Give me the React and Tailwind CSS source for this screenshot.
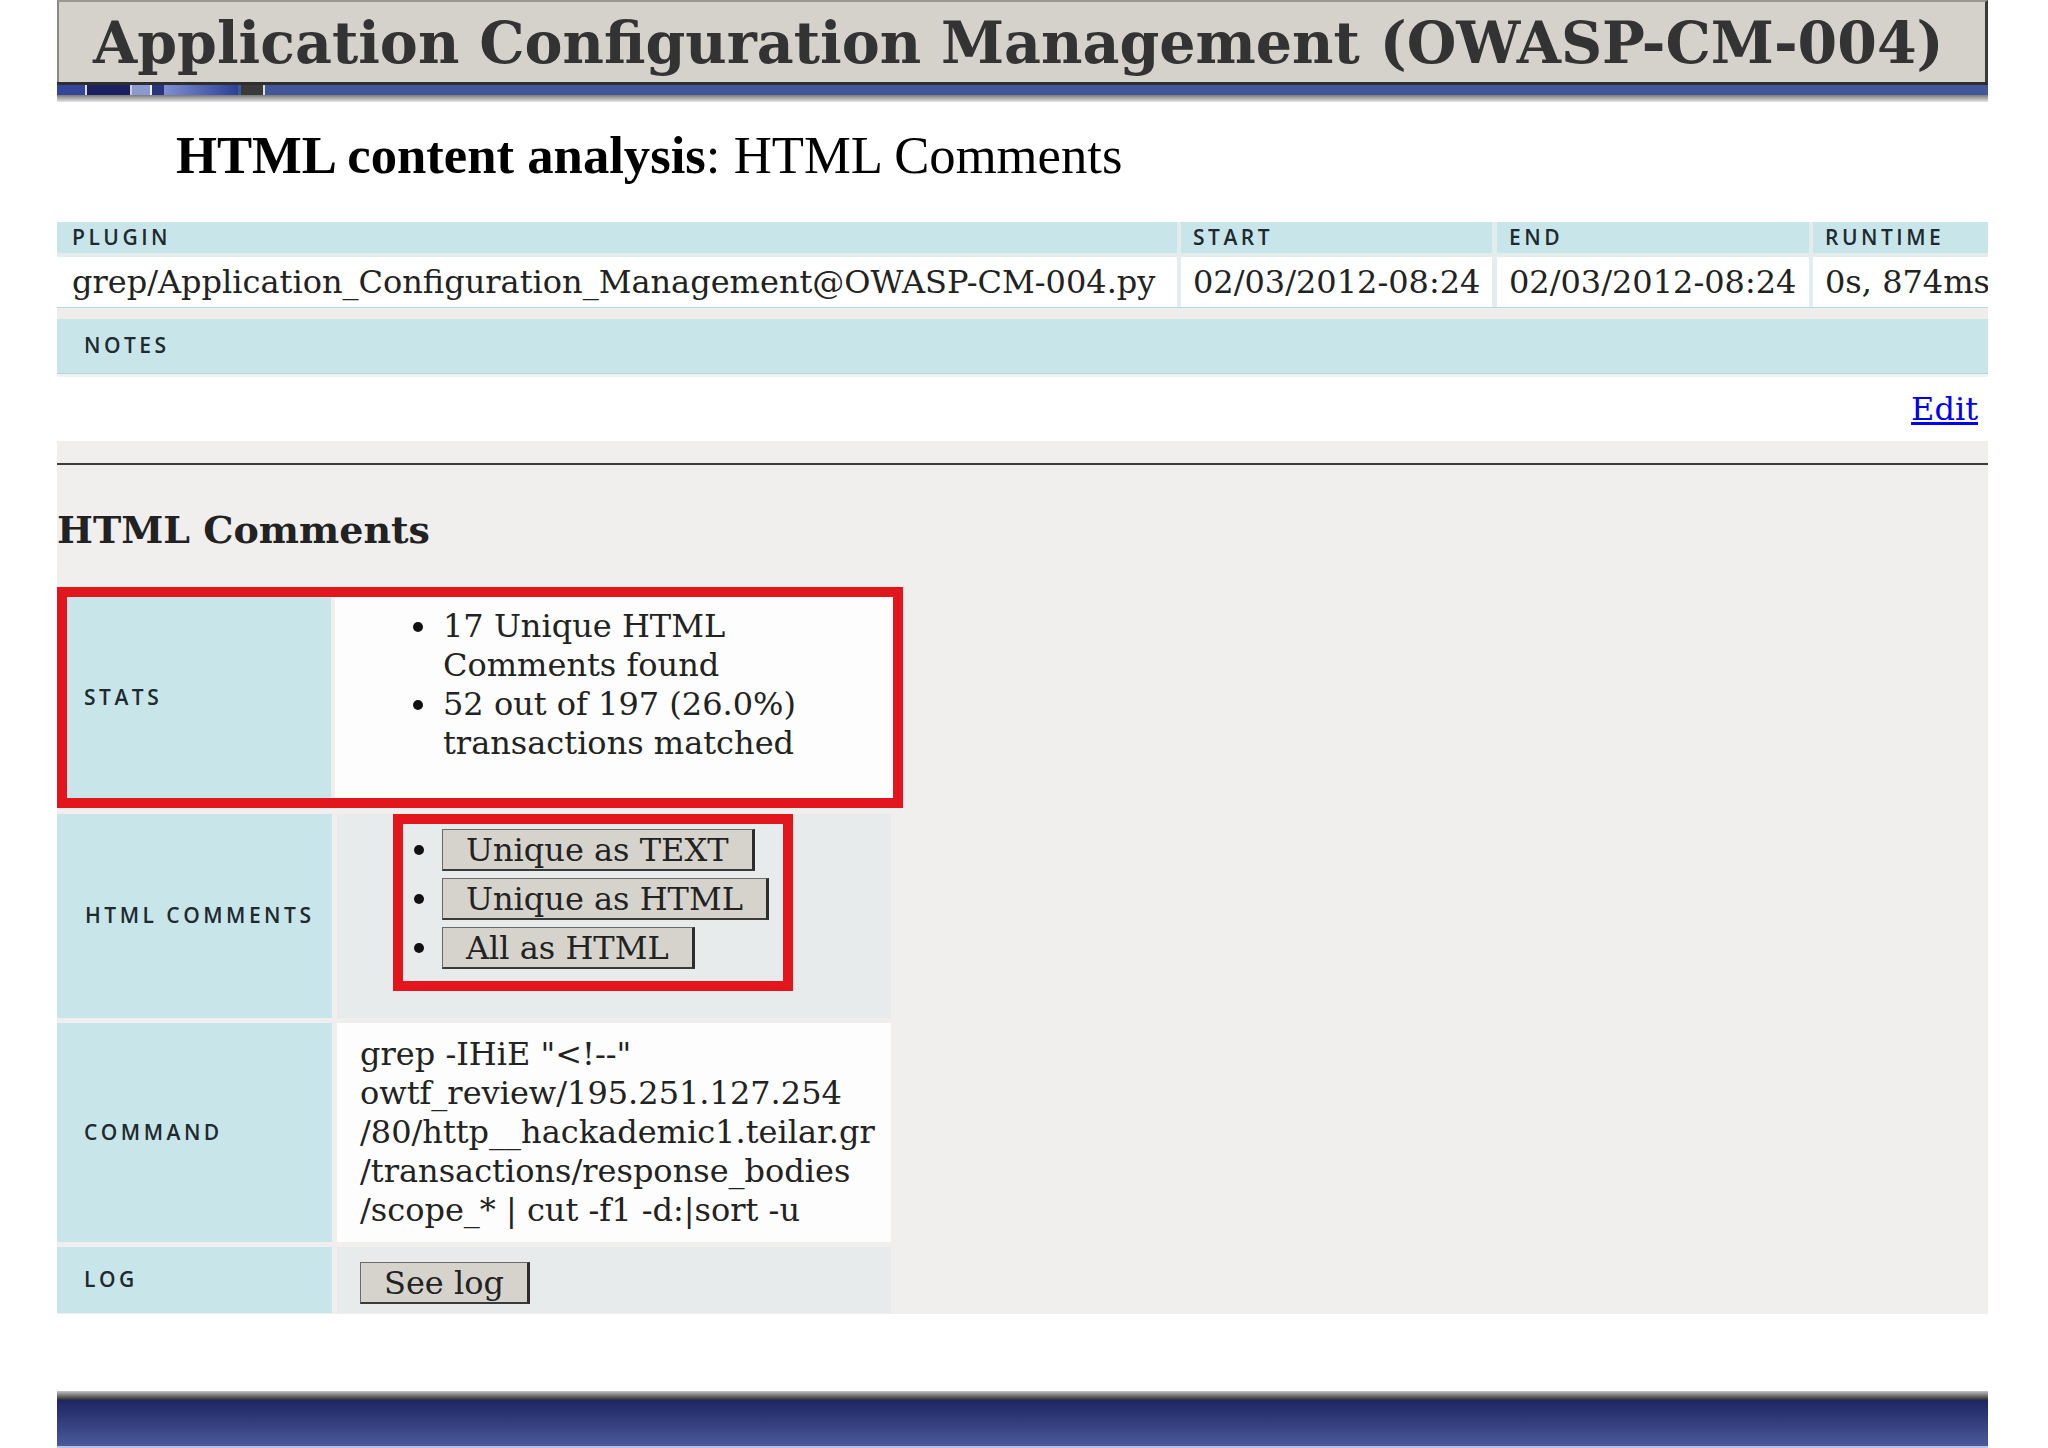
import React from "react";

const serif = "font-['DejaVu_Serif',serif]";
const label =
  "font-['Open_Sans',sans-serif] font-semibold text-[21px] tracking-[3.5px] text-[#1e2a30] uppercase whitespace-nowrap";

function Btn({ children }) {
  return (
    <div className="h-[42px] px-[23px] bg-[#d6d3cd] border-t border-l border-t-[#6a6a6a] border-l-[#6a6a6a] border-r-[3px] border-r-[#2d2d2d] border-b-[2px] border-b-[#3a3a3a] flex items-center">
      <span className={`${serif} text-[32px] leading-none text-[#222] whitespace-nowrap`}>{children}</span>
    </div>
  );
}

function Dot() {
  return <div className="w-[10px] h-[10px] rounded-full bg-[#111]" />;
}

export default function App() {
  return (
    <div className="w-[2048px] h-[1448px] bg-white overflow-hidden">
      <div className="ml-[57px] w-[1931px] flex flex-col">
        {/* header */}
        <div className="h-[82px] bg-[#d5d2cb] border-t-2 border-t-[#9a9894] border-l-2 border-l-[#8a8884] border-r-[3px] border-r-[#3a3a3a] flex items-center pl-[34px]">
          <span className={`${serif} font-bold text-[57px] leading-none text-[#333] whitespace-nowrap`}>
            Application Configuration Management (OWASP-CM-004)
          </span>
        </div>
        <div className="h-[3px] bg-[#2e2e2e]" />
        <div className="h-[10px] flex bg-[#42579a]">
          <div className="w-[28px] bg-[#34469c]" />
          <div className="w-[2px] bg-[#dde]" />
          <div className="w-[43px] bg-[#1b2060]" />
          <div className="w-[2px] bg-[#ccd]" />
          <div className="w-[18px] bg-[#8a9ad0]" />
          <div className="w-[2px] bg-[#eee]" />
          <div className="w-[12px] bg-[#2a3580]" />
          <div className="w-[74px] bg-gradient-to-r from-[#7f8fd0] to-[#2f3f98]" />
          <div className="w-[3px] bg-[#42579a]" />
          <div className="w-[22px] bg-[#3a3a3a]" />
          <div className="w-[2px] bg-[#ddd]" />
        </div>
        <div className="h-[7px] bg-gradient-to-b from-[#7a7a7a] to-[#e6e6e6]" />

        {/* page title */}
        <div className="mt-[27px] pl-[119px] font-['Liberation_Serif',serif] text-[52.7px] leading-[52px] text-black whitespace-nowrap">
          <span className="font-bold">HTML content analysis</span>: HTML Comments
        </div>

        {/* plugin table */}
        <div className="mt-[41px] flex flex-col bg-[#e4eded] gap-[4px]">
          <div className="flex h-[31px] gap-[4px]">
            <div className="w-[1120px] bg-[#c8e6e9] flex items-center pl-[15px]"><span className={label}>Plugin</span></div>
            <div className="w-[311px] bg-[#c8e6e9] flex items-center pl-[12px]"><span className={label}>Start</span></div>
            <div className="w-[312px] ml-[1px] bg-[#c8e6e9] flex items-center pl-[12px]"><span className={label}>End</span></div>
            <div className="w-[175px] bg-[#c8e6e9] flex items-center pl-[12px]"><span className={label}>Runtime</span></div>
          </div>
          <div className={`flex h-[50px] gap-[4px] ${serif} text-[32px] text-[#222] whitespace-nowrap`}>
            <div className="w-[1120px] bg-white flex items-center pl-[15px] overflow-hidden">grep/Application_Configuration_Management@OWASP-CM-004.py</div>
            <div className="w-[311px] bg-white flex items-center pl-[12px] overflow-hidden">02/03/2012-08:24</div>
            <div className="w-[312px] ml-[1px] bg-white flex items-center pl-[12px] overflow-hidden">02/03/2012-08:24</div>
            <div className="w-[175px] bg-white flex items-center pl-[12px] overflow-hidden">0s, 874ms</div>
          </div>
        </div>
        <div className="h-[1px] bg-[#b9d9dc]" />
        <div className="h-[11px] bg-[#efecec]" />
        <div className="h-[55px] bg-[#c8e6e9] border-b border-b-[#b4d6d9] flex items-center pl-[27px]">
          <span className={label}>Notes</span>
        </div>
        <div className="h-[3px] bg-[#eef3f3]" />
        <div className="h-[64px] bg-white flex items-center justify-end pr-[10px]">
          <a href="#" className={`${serif} text-[32px] text-[#0000ee] underline`}>Edit</a>
        </div>

        {/* results section */}
        <div className="h-[873px] bg-[#f1eeee] flex flex-col">
          <div className="mt-[22px] h-[2px] bg-[#3d3d3d]" />
          <div className={`mt-[46px] ${serif} font-bold text-[38px] leading-[37px] text-[#222] whitespace-nowrap`}>HTML Comments</div>

          <div className="mt-[39px] flex flex-col w-[846px]">
            {/* stats row with red highlight */}
            <div className="border-[10px] border-[#e3161e] flex h-[221px] gap-[4px]">
              <div className="w-[264px] bg-[#c8e6e9] flex items-center pl-[17px]"><span className={label}>Stats</span></div>
              <div className={`flex-1 bg-[#fdfdfd] pt-[10px] pl-[78px] ${serif} text-[32px] leading-[39px] text-[#222]`}>
                <div className="flex">
                  <div className="w-[30px] h-[39px] flex items-center"><Dot /></div>
                  <div>17 Unique HTML<br />Comments found</div>
                </div>
                <div className="flex">
                  <div className="w-[30px] h-[39px] flex items-center"><Dot /></div>
                  <div>52 out of 197 (26.0%)<br />transactions matched</div>
                </div>
              </div>
            </div>

            {/* html comments row */}
            <div className="mt-[6px] flex h-[204px] gap-[5px] w-[834px]">
              <div className="w-[275px] bg-[#c8e6e9] flex items-center pl-[28px]"><span className={label}>HTML Comments</span></div>
              <div className="flex-1 bg-[#e8ebeb]">
                <div className="ml-[56px] w-[400px] border-[10px] border-[#e3161e] pt-[5px] pb-[12px] flex flex-col gap-[7px]">
                  {["Unique as TEXT", "Unique as HTML", "All as HTML"].map((t) => (
                    <div key={t} className="flex items-center">
                      <div className="w-[39px] pl-[11px] flex items-center"><Dot /></div>
                      <Btn>{t}</Btn>
                    </div>
                  ))}
                </div>
              </div>
            </div>

            {/* command row */}
            <div className="mt-[5px] flex h-[219px] gap-[5px] w-[834px]">
              <div className="w-[275px] bg-[#c8e6e9] flex items-center pl-[27px]"><span className={label}>Command</span></div>
              <div className={`flex-1 bg-[#fdfdfd] flex items-center pl-[23px] ${serif} text-[32px] leading-[39px] text-[#222] whitespace-nowrap overflow-hidden`}>
                <div>
                  grep -IHiE "&lt;!--"<br />
                  owtf_review/195.251.127.254<br />
                  /80/http__hackademic1.teilar.gr<br />
                  /transactions/response_bodies<br />
                  /scope_* | cut -f1 -d:|sort -u
                </div>
              </div>
            </div>

            {/* log row */}
            <div className="mt-[5px] flex h-[66px] gap-[5px] w-[834px]">
              <div className="w-[275px] bg-[#c8e6e9] flex items-center pl-[27px]"><span className={label}>Log</span></div>
              <div className="flex-1 bg-[#e8ebeb] pt-[15px] pl-[23px] flex items-start">
                <Btn>See log</Btn>
              </div>
            </div>
          </div>
        </div>

        {/* footer bar */}
        <div className="mt-[77px] h-[9px] bg-gradient-to-b from-[#c4c4c4] to-[#2e2e2e]" />
        <div className="h-[46px] bg-gradient-to-b from-[#1f2563] to-[#4a5a9a]" />
        <div className="h-[2px] bg-[#b8c4e0]" />
      </div>
    </div>
  );
}
